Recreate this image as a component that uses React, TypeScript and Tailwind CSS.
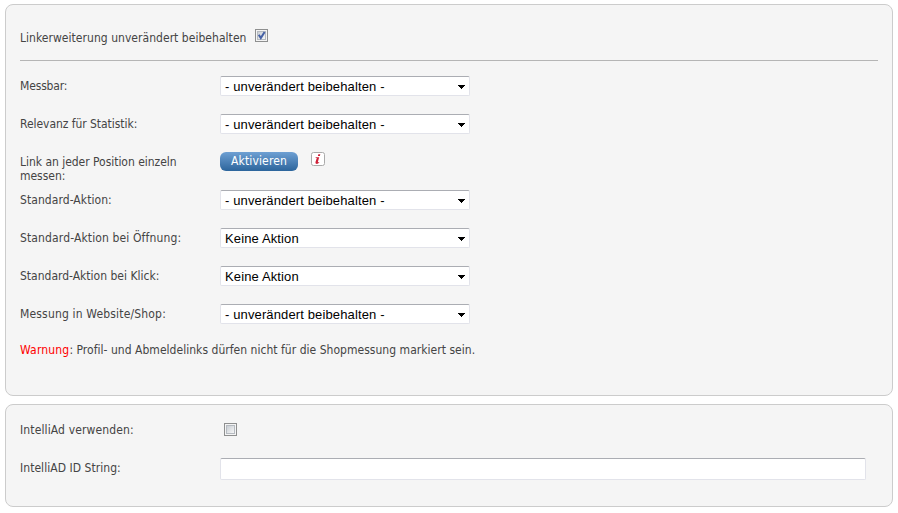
import type { ReactNode } from 'react';

const field = 'rounded-[2px] border border-[#e2e3ea] border-t-[#abadb3] bg-white';

function Panel({ className, children }: { className: string; children: ReactNode }) {
  return (
    <section className={`rounded-lg border border-[#cccccc] bg-[#f5f5f5] px-3.5 ${className}`}>
      {children}
    </section>
  );
}

function Row({ label, spacing = '', children }: { label: string; spacing?: string; children: ReactNode }) {
  return (
    <div className="flex h-[38px] items-start">
      <div className={`w-[200px] shrink-0 pt-[3px] pr-8 ${spacing}`}>{label}</div>
      {children}
    </div>
  );
}

function Select({ value }: { value: string }) {
  return (
    <div className={`flex h-5 w-[250px] items-center justify-between pr-1 pl-1 font-['Liberation_Sans',Arial,sans-serif] text-[13px] leading-[18px] tracking-[0.13px] text-black ${field}`}>
      <span className="pt-0.5">{value}</span>
      <svg width="7" height="4" viewBox="0 0 7 4" shapeRendering="crispEdges" className="mt-0.5">
        <path d="M0 0h7v1H0zM1 1h5v1H1zM2 2h3v1H2zM3 3h1v1H3z" fill="#000" />
      </svg>
    </div>
  );
}

function Checkbox({ checked = false }: { checked?: boolean }) {
  return (
    <div className="flex size-[13px] items-center justify-center border border-[#8e8f8f] bg-[#f4f4f4]">
      <div className="size-[9px] border border-[#b5bac0] bg-linear-to-br from-[#c9ced4] to-[#f6f6f6]">
        {checked && (
          <svg width="9" height="9" viewBox="0 0 9 9" className="-mt-px -ml-px">
            <path d="M1.8 3.8 3.8 7 7.6 1" fill="none" stroke="#4560a5" strokeWidth="2" />
          </svg>
        )}
      </div>
    </div>
  );
}

const KEEP = '- unverändert beibehalten -';

export default function App() {
  return (
    <main className="flex h-[513px] w-[898px] flex-col gap-2 bg-white pt-1 pr-[5px] pl-[5px] font-['DejaVu_Sans_Condensed','DejaVu_Sans',Tahoma,sans-serif] text-[12px] leading-[14px] font-normal text-[#444444] [font-stretch:condensed]">
      <Panel className="h-[392px]">
        <div className="flex h-14 items-start gap-[9px] border-b border-[#b5b5b5] pt-6">
          <span className="w-[226px] pt-[2px] tracking-[0.04px] whitespace-nowrap">Linkerweiterung unverändert beibehalten</span>
          <Checkbox checked />
        </div>
        <div className="pt-[15px]">
          <Row label="Messbar:" spacing="tracking-[-0.15px]"><Select value={KEEP} /></Row>
          <Row label="Relevanz für Statistik:" spacing="tracking-[-0.05px]"><Select value={KEEP} /></Row>
          <Row label="Link an jeder Position einzeln messen:" spacing="tracking-[-0.03px]">
            <button className="h-[19px] w-[78px] rounded-md bg-linear-to-b from-[#6ea0d3] to-[#2c659c] pb-px leading-[18px] tracking-[0.15px] text-white">
              Aktivieren
            </button>
            <svg width="14" height="14" viewBox="0 0 14 14" className="ml-[13px]">
              <rect x=".5" y=".5" width="13" height="13" rx="2" fill="#fff" stroke="#aaaaaa" />
              <path d="M7.3 2.2h2L8.9 4h-2zM4.8 5.2h3.4L6.9 9.8q-.2 1 1.2.2l.2.5q-1.6 1.7-3 1.3-1.2-.3-.8-1.7L5.8 6H4.5z" fill="#cf2138" />
            </svg>
          </Row>
          <Row label="Standard-Aktion:" spacing="tracking-[0.07px]"><Select value={KEEP} /></Row>
          <Row label="Standard-Aktion bei Öffnung:" spacing="tracking-[0.13px]"><Select value="Keine Aktion" /></Row>
          <Row label="Standard-Aktion bei Klick:"><Select value="Keine Aktion" /></Row>
          <Row label="Messung in Website/Shop:" spacing="tracking-[0.17px]"><Select value={KEEP} /></Row>
        </div>
        <p className="pt-px tracking-[0.03px] whitespace-nowrap">
          <span className="tracking-[0.18px] text-[#ff0000]">Warnung</span>: Profil- und Abmeldelinks dürfen nicht für die Shopmessung markiert sein.
        </p>
      </Panel>
      <Panel className="h-[103px] pt-[15px]">
        <Row label="IntelliAd verwenden:" spacing="tracking-[0.13px]">
          <div className="pt-[3px] pl-1"><Checkbox /></div>
        </Row>
        <Row label="IntelliAD ID String:" spacing="tracking-[0.05px]">
          <input type="text" aria-label="IntelliAD ID String" className={`h-[22px] w-[646px] ${field}`} />
        </Row>
      </Panel>
    </main>
  );
}
